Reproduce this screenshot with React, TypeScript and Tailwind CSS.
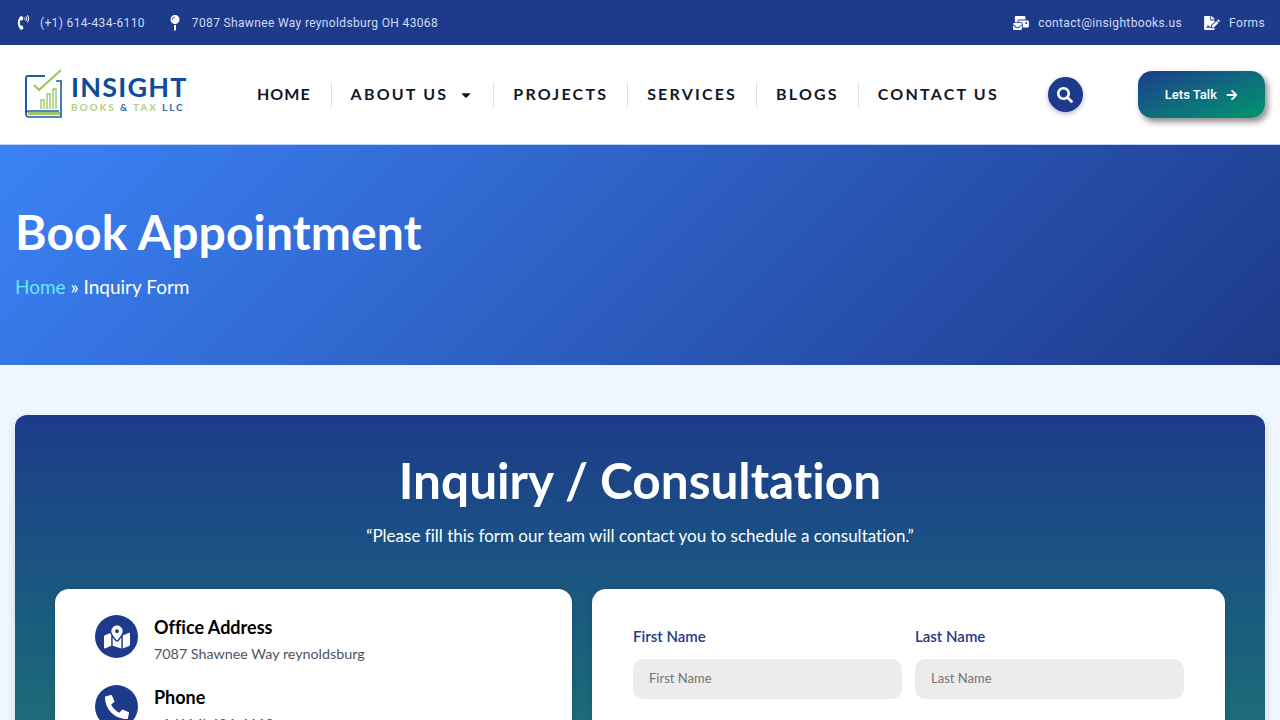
import { FaArrowRight, FaCaretDown, FaFileSignature, FaMailBulk, FaMapMarkedAlt, FaMapPin, FaPhoneAlt, FaPhoneVolume, FaSearch } from 'react-icons/fa';

const HEADING = "font-['Lato','Noto_Sans',sans-serif] [font-variant-ligatures:none]";
const NAV_ITEMS = ['HOME', 'ABOUT US', 'PROJECTS', 'SERVICES', 'BLOGS', 'CONTACT US'];

function TopBar() {
  return (
    <div className="flex h-[45px] items-center justify-between bg-[#1e3a8a] pl-[17px] pr-[15px] font-['Roboto',sans-serif] text-[12px] tracking-[0.35px] text-[#cfdcf5]">
      <div className="flex items-center">
        <FaPhoneVolume className="h-[15px] w-[13px] text-white" />
        <span className="ml-[10px]">(+1) 614-434-6110</span>
        <FaMapPin className="ml-[25px] h-[16px] w-[10px] text-white" />
        <span className="ml-[12px]">7087 Shawnee Way reynoldsburg OH 43068</span>
      </div>
      <div className="flex items-center">
        <FaMailBulk className="h-[14px] w-[16px] text-white" />
        <span className="ml-[9px]">contact@insightbooks.us</span>
        <FaFileSignature className="ml-[22px] h-[14px] w-[16px] text-white" />
        <span className="ml-[9px]">Forms</span>
      </div>
    </div>
  );
}

function Logo() {
  return (
    <div className="flex items-start">
      <svg width="38" height="50" viewBox="0 0 38 50" fill="none" className="mt-[-1px]">
        <path d="M20 7H3a2 2 0 0 0-2 2v36" stroke="#1c5bab" strokeWidth="2" />
        <path d="M31 12h5v36H4a3 3 0 0 1-3-3v0a3 3 0 0 1 3-3h30" stroke="#1c5bab" strokeWidth="1.6" />
        <rect x="3" y="43" width="32" height="3" fill="#9cc763" />
        <path d="M9 16l5 5L36 1" stroke="#9cc763" strokeWidth="2.2" />
        <path d="M16 40V31h3v9M22 40V25h3v15M28 40V20h3v20" stroke="#9cc763" strokeWidth="1.4" />
      </svg>
      <div className="ml-[8px] mt-[2px]">
        <div className={`${HEADING} text-[27px] font-bold leading-[30px] tracking-[1.2px] text-[#0f4a9c]`}>INSIGHT</div>
        <div className={`${HEADING} text-[10px] font-bold leading-[10px] tracking-[1.9px] text-[#b3cf88]`}>
          BOOKS <span className="text-[#3d64a8]">&amp;</span> TAX <span className="text-[#3d64a8]">LLC</span>
        </div>
      </div>
    </div>
  );
}

function navItemPadding(item: string) {
  if (item === 'HOME') return 'pl-[19px] pr-[20px] tracking-[1px]';
  if (item === 'ABOUT US') return 'pl-[19px] pr-[21px] tracking-[2.2px]';
  return 'px-[19px] tracking-[2.2px]';
}

function NavBar() {
  return (
    <div className="flex h-[100px] items-center border-b border-[#bcd4fb] bg-white pl-[25px]">
      <div className="w-[213px] shrink-0">
        <Logo />
      </div>
      <nav className="flex items-center">
        {NAV_ITEMS.map((item, index) => (
          <div key={item} className={`flex h-[26px] items-center whitespace-nowrap ${navItemPadding(item)} ${index > 0 ? 'border-l border-[#dfe3e8]' : ''}`}>
            <span className={`${HEADING} mb-[2px] text-[16px] font-bold text-[#111827]`}>{item}</span>
            {item === 'ABOUT US' && <FaCaretDown className="ml-[12px] h-[14px] w-[12px] text-[#111827]" />}
          </div>
        ))}
      </nav>
      <div className="ml-[30px] flex h-[35px] w-[35px] shrink-0 items-center justify-center rounded-full bg-[#1e3a8a] shadow-[0_2px_5px_rgba(30,58,138,0.35)]">
        <FaSearch className="h-[16px] w-[16px] text-white" />
      </div>
      <div className="ml-[55px] -mt-[1px] flex h-[47px] w-[127px] shrink-0 items-center justify-center rounded-[14px] bg-gradient-to-br from-[#1e3a8a] to-[#059669] pt-[1px] font-['Roboto',sans-serif] text-[13px] font-medium text-white shadow-[3px_4px_6px_rgba(0,0,0,0.45)]">
        Lets Talk
        <FaArrowRight className="ml-[9px] h-[12px] w-[12px]" />
      </div>
    </div>
  );
}

function Hero() {
  return (
    <section className={`${HEADING} h-[220px] bg-[linear-gradient(135deg,#3b82f6,#1e3a8a)] pl-[15px] pt-[57px] text-white`}>
      <h1 className="text-[48px] font-bold leading-[60px] tracking-[0.12px]">Book Appointment</h1>
      <p className="mt-[10px] text-[19px] leading-[30px]">
        <span className="text-[#67e8f9]">Home</span> » Inquiry Form
      </p>
    </section>
  );
}

function ContactItem({ icon, title, text }: { icon: React.ReactNode; title: string; text: string }) {
  return (
    <div className="flex gap-[16px]">
      <div className="flex h-[43px] w-[43px] shrink-0 items-center justify-center rounded-full bg-[#1e3a8a] text-white">{icon}</div>
      <div>
        <h3 className={`${HEADING} text-[18px] font-bold leading-[24px] text-black`}>{title}</h3>
        <p className={`${HEADING} mt-[4px] text-[14.3px] leading-[22px] text-[#4b5563]`}>{text}</p>
      </div>
    </div>
  );
}

function Field({ label, placeholder }: { label: string; placeholder: string }) {
  return (
    <div>
      <label className={`${HEADING} block text-[15px] font-semibold leading-[20px] text-[#1e3a8a]`}>{label}</label>
      <div className={`${HEADING} mt-[13px] flex h-[40px] items-center rounded-[10px] bg-[#ececec] pl-[16px] text-[13px] text-[#757575]`}>{placeholder}</div>
    </div>
  );
}

export default function App() {
  return (
    <div className="h-[720px] overflow-hidden bg-[#eff6ff]">
      <TopBar />
      <NavBar />
      <Hero />
      <main className="px-[15px] pt-[50px]">
        <section className="h-[640px] rounded-[12px] bg-gradient-to-b from-[#1e3a8a] to-[#2f9a55] px-[40px] pt-[35px] shadow-[0_4px_12px_rgba(0,0,0,0.12)]">
          <h2 className={`${HEADING} text-center text-[49.5px] font-bold leading-[60px] text-white`}>Inquiry / Consultation</h2>
          <p className={`${HEADING} mt-[12px] text-center text-[17px] leading-[28px] text-white`}>“Please fill this form our team will contact you to schedule a consultation.”</p>
          <div className="mt-[39px] grid grid-cols-[517px_633px] gap-[20px]">
            <div className="flex h-[500px] flex-col gap-[20px] rounded-[14px] bg-white pl-[40px] pt-[26px] shadow-[0_0_6px_rgba(0,0,0,0.15)]">
              <ContactItem icon={<FaMapMarkedAlt className="h-[24px] w-[26px]" />} title="Office Address" text="7087 Shawnee Way reynoldsburg" />
              <ContactItem icon={<FaPhoneAlt className="h-[24px] w-[24px]" />} title="Phone" text="+1 (614) 434-6110" />
            </div>
            <div className="h-[500px] rounded-[14px] bg-white px-[41px] pt-[37px] shadow-[0_0_6px_rgba(0,0,0,0.15)]">
              <div className="grid grid-cols-2 gap-[13px]">
                <Field label="First Name" placeholder="First Name" />
                <Field label="Last Name" placeholder="Last Name" />
              </div>
            </div>
          </div>
        </section>
      </main>
    </div>
  );
}
